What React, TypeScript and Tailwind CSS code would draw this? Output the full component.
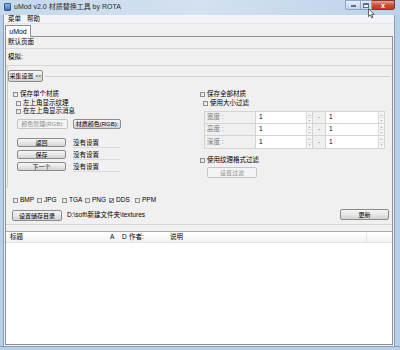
import type { ReactNode } from 'react';

const FONT = "font-['Liberation_Sans','Noto_Sans_CJK_SC',sans-serif]";

function Check({ checked = false }: { checked?: boolean }) {
  return (
    <span className="relative w-[5px] h-[5px] shrink-0 border border-[#8e8f8f] bg-gradient-to-br from-[#dcdcdc] to-[#fbfbfb]">
      {checked && (
        <svg viewBox="0 0 5 5" className="absolute -left-[1px] -top-[1px] w-[5px] h-[5px]">
          <path d="M0.8 2.6 L2 3.8 L4.3 0.9" fill="none" stroke="#2c3f6b" strokeWidth="0.9" />
        </svg>
      )}
    </span>
  );
}

function CheckRow({ label, checked, className = '' }: { label: string; checked?: boolean; className?: string }) {
  return (
    <div className={`flex items-center gap-[2px] h-[8px] ${className}`}>
      <Check checked={checked} />
      <span className="leading-none">{label}</span>
    </div>
  );
}

function Btn({ children, disabled, className = '' }: { children: ReactNode; disabled?: boolean; className?: string }) {
  return (
    <div
      className={`flex items-center justify-center whitespace-nowrap overflow-hidden rounded-[2px] border leading-none text-[6px] ${
        disabled
          ? 'border-[#c3c5c8] bg-[#f4f4f4] text-[#8d8d8d]'
          : 'border-[#8b8b8b] bg-gradient-to-b from-[#f6f6f6] via-[#e6e6e6] to-[#d3d3d3] text-black'
      } ${className}`}
    >
      {children}
    </div>
  );
}

function Spin() {
  return (
    <div className="w-[6px] flex flex-col border-l border-[#dadada] bg-[#f6f6f6]">
      <div className="flex-1 flex items-center justify-center border-b border-[#e2e2e2]">
        <svg viewBox="0 0 4 2" className="w-[3px] h-[2px]"><path d="M0 2 L2 0 L4 2Z" fill="#b4b4b4" /></svg>
      </div>
      <div className="flex-1 flex items-center justify-center">
        <svg viewBox="0 0 4 2" className="w-[3px] h-[2px]"><path d="M0 0 L2 2 L4 0Z" fill="#b4b4b4" /></svg>
      </div>
    </div>
  );
}

function SizeRow({ label, last }: { label: string; last?: boolean }) {
  return (
    <div className={`flex h-[12px] ${last ? '' : 'border-b border-[#d4d4d4]'}`}>
      <div className="w-[51px] flex items-center pl-[2px] text-[#7a7a7a] bg-[#f0f0f0] border-r border-[#d4d4d4]">{label}</div>
      <div className="w-[50px] flex items-center pl-[3px] bg-white">1</div>
      <Spin />
      <div className="w-[14px] flex items-center justify-center text-[#7a7a7a] bg-[#f0f0f0] border-x border-[#d4d4d4]">-</div>
      <div className="w-[52px] flex items-center pl-[3px] bg-white">1</div>
      <Spin />
    </div>
  );
}

function StatusRow({ btn, className = '' }: { btn: string; className?: string }) {
  return (
    <div className={`flex items-start h-[10px] ${className}`}>
      <Btn className="w-[49px] h-[9px] ml-[9px]">{btn}</Btn>
      <div className="ml-[7px] w-[47px] h-[10px] border-b border-[#dcdcdc] leading-none pt-[2px]">没有设置</div>
    </div>
  );
}

export default function App() {
  return (
    <div className={`relative w-[400px] h-[350px] flex flex-col overflow-hidden whitespace-nowrap bg-[#b8cfe8] text-[6.5px] text-black ${FONT}`}>
      {/* title bar */}
      <div className="h-[15px] flex items-start bg-gradient-to-r from-[#c6d8ec] via-[#d3e1f1] to-[#bcd2ea]">
        <div className="mt-[3px] ml-[4px] w-[7px] h-[8px] rounded-[1px] bg-gradient-to-b from-[#8fb6e0] to-[#3d6fb0] border border-[#2f5a94]" />
        <div className="mt-[3px] ml-[3px] text-[7px] leading-none text-[#2a2a2a]">uMod v2.0 材质替换工具 by ROTA</div>
        <div className="ml-auto mr-[5px] flex h-[10px]">
          <div className="w-[15px] border border-[#8ea6c4] border-r-0 rounded-bl-[3px] bg-gradient-to-b from-[#e4edf7] to-[#c4d5ea] flex items-end justify-center pb-[2px]">
            <div className="w-[5px] h-[2px] bg-white border border-[#5d6f86]" />
          </div>
          <div className="w-[12px] border border-[#8ea6c4] bg-gradient-to-b from-[#e4edf7] to-[#c4d5ea] flex items-center justify-center">
            <div className="w-[6px] h-[5px] border border-[#5d6f86] border-t-2 bg-white/60" />
          </div>
          <div className="w-[23px] border border-[#7a3a30] border-l-0 rounded-br-[3px] bg-gradient-to-b from-[#e8a493] via-[#c9503a] to-[#c23a22] flex items-center justify-center text-white text-[7px] font-bold leading-none">
            x
          </div>
        </div>
      </div>

      <div className="flex flex-1 min-h-0">
        <div className="w-[4px] border-r border-[#8a9fba]" />
        <div className="flex-1 flex flex-col bg-[#f0f0f0]">
          {/* menu */}
          <div className="h-[9px] flex items-center gap-[6px] pl-[4px] bg-[#f3f4f9] border-b border-[#e4e6ee] leading-none">
            <span>菜单</span>
            <span>帮助</span>
          </div>
          {/* tabs */}
          <div className="h-[12px] flex items-end">
            <div className="relative z-10 -mb-px ml-[1px] w-[26px] h-[12px] border border-b-0 border-[#8d9098] bg-white flex items-center justify-center text-[7px] leading-none">
              uMod
            </div>
          </div>
          {/* panel */}
          <div className="flex-1 min-h-0 mx-[1px] mb-[1px] border border-[#8d9098] flex flex-col">
            <div className="h-[12px] flex items-center pl-[2px] border-b border-[#d7d7d7] leading-none">默认页面</div>
            <div className="h-[17px] pt-[5px] pl-[2px] border-b border-[#d7d7d7] leading-none">模拟:</div>

            {/* capture group */}
            <div className="ml-[1px] border-l border-[#d2d2d2] pt-[4px] pb-[10px]">
              <div className="flex items-center pr-[2px]">
                <Btn className="w-[35px] h-[12px] gap-[2px]">
                  采集设置 <span className="text-[5px]">&lt;&lt;</span>
                </Btn>
                <div className="flex-1 h-px bg-[#d2d2d2] ml-[2px]" />
              </div>
              <div className="flex mt-[8px]">
                <div className="w-[188px] pl-[5px] flex flex-col">
                  <CheckRow label="保存单个材质" />
                  <CheckRow label="左上角显示纹理" className="ml-[3px] mt-[1px]" />
                  <CheckRow label="在左上角显示消息" className="ml-[3px]" />
                  <div className="flex mt-[4px] ml-[4px] gap-[5px]">
                    <Btn disabled className="w-[51px] h-[10px]">颜色管理(RGB):</Btn>
                    <Btn className="w-[48px] h-[10px]">材质颜色(RGB):</Btn>
                  </div>
                  <div className="-ml-[5px]">
                    <StatusRow btn="返回" className="mt-[9px]" />
                    <StatusRow btn="保存" className="mt-[2px]" />
                    <StatusRow btn="下一个" className="mt-[2px]" />
                  </div>
                </div>
                <div className="ml-[4px] flex flex-col">
                  <CheckRow label="保存全部材质" />
                  <CheckRow label="使用大小过滤" className="ml-[3px] mt-[1px]" />
                  <div className="ml-[4px] mt-[4px] w-[181px] border border-[#d4d4d4] leading-none">
                    <SizeRow label="宽度 :" />
                    <SizeRow label="高度 :" />
                    <SizeRow label="深度 :" last />
                  </div>
                  <CheckRow label="使用纹理格式过滤" className="mt-[7px]" />
                  <Btn disabled className="w-[50px] h-[11px] ml-[7px] mt-[3px]">设置过滤</Btn>
                </div>
              </div>
            </div>

            {/* formats */}
            <div className="flex mt-[8px] pl-[7px] h-[8px] items-center">
              <CheckRow label="BMP" className="w-[24px]" />
              <CheckRow label="JPG" className="w-[25px]" />
              <CheckRow label="TGA" className="w-[23px]" />
              <CheckRow label="PNG" className="w-[24px]" />
              <CheckRow label="DDS" checked className="w-[26px]" />
              <CheckRow label="PPM" />
            </div>

            {/* directory */}
            <div className="mt-[5px] pb-[3px] flex items-start border-b border-[#d7d7d7]">
              <Btn className="ml-[6px] mt-[1px] w-[50px] h-[11px]">设置储存目录</Btn>
              <div className="ml-[5px] mt-[3px] leading-none">D:\soft\新建文件夹\textures</div>
              <Btn className="ml-auto mr-[3px] w-[49px] h-[11px]">更新</Btn>
            </div>

            {/* list */}
            <div className="mt-[6px] flex-1 min-h-0 border-t border-[#a9acb3] bg-white flex flex-col">
              <div className="h-[11px] relative flex items-center leading-none bg-gradient-to-b from-white to-[#f1f2f4] border-b border-[#e3e4e6]">
                <span className="ml-[4px] w-[100px]">标题</span>
                <span className="w-[12px]">A</span>
                <span className="w-[7px]">D</span>
                <span className="w-[41px]">作者:</span>
                <span>说明</span>
                <span className="ml-auto mr-[25px] w-px h-[11px] bg-[#e3e4e6]" />
              </div>
              <div className="flex-1" />
            </div>
          </div>
        </div>
        <div className="w-[6px] border-l border-[#8a9fba]" />
      </div>
      <div className="h-[4px] border-t border-[#8a9fba]" />

      {/* mouse cursor */}
      <svg viewBox="0 0 8 12" className="absolute left-[368px] top-[8px] w-[7px] h-[11px]">
        <path d="M0.5 0.5 L0.5 9.5 L2.7 7.5 L4.2 11 L5.6 10.4 L4.2 7 L7 7Z" fill="white" stroke="black" strokeWidth="0.7" />
      </svg>
    </div>
  );
}
